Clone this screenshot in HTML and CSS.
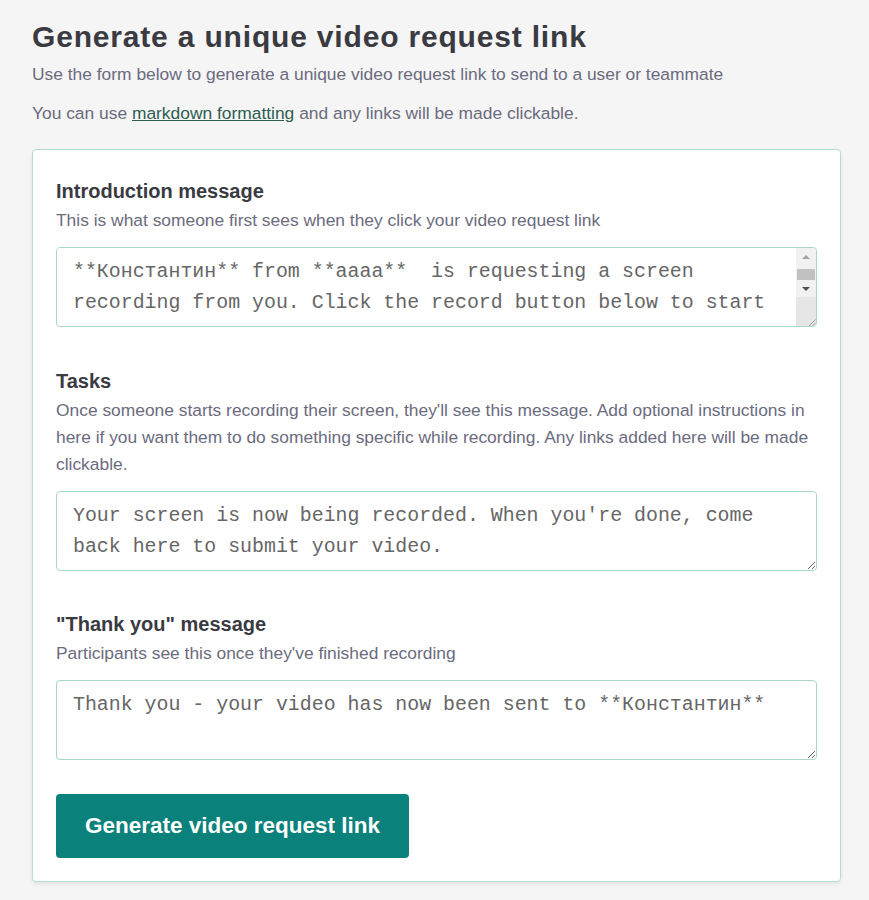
FILE: index.html
```html
<!DOCTYPE html>
<html lang="en">
<head>
<meta charset="utf-8">
<title>Generate a unique video request link</title>
<link rel="stylesheet" href="styles.css">
</head>
<body>
<main class="page">
  <header class="intro">
    <h1 class="title">Generate a unique video request link</h1>
    <p class="lead">Use the form below to generate a unique video request link to send to a user or teammate</p>
    <p class="lead">You can use <a href="#" class="link">markdown formatting</a> and any links will be made clickable.</p>
  </header>
  <form class="card">
    <section class="field">
      <h2 class="field-title">Introduction message</h2>
      <p class="field-desc">This is what someone first sees when they click your video request link</p>
      <div class="box-frame">
        <textarea class="box-input">**Константин** from **aaaa**  is requesting a screen recording from you. Click the record button below to start recording your screen. When you're done, you'll be able to submit your video.</textarea>
        <div class="scrollbar" aria-hidden="true">
          <span class="sb-btn sb-up"></span>
          <span class="sb-track"><span class="sb-thumb"></span></span>
          <span class="sb-btn sb-down"></span>
          <span class="sb-corner">
            <svg width="10" height="10" viewBox="0 0 10 10"><path d="M9.5 2.5 L2.5 9.5 M9.5 6 L6 9.5" stroke="#9a9a9a" stroke-width="1" fill="none"/></svg>
          </span>
        </div>
      </div>
    </section>
    <section class="field">
      <h2 class="field-title">Tasks</h2>
      <p class="field-desc">Once someone starts recording their screen, they'll see this message. Add optional instructions in here if you want them to do something specific while recording. Any links added here will be made clickable.</p>
      <textarea class="box">Your screen is now being recorded. When you're done, come back here to submit your video.</textarea>
    </section>
    <section class="field">
      <h2 class="field-title">"Thank you" message</h2>
      <p class="field-desc">Participants see this once they've finished recording</p>
      <textarea class="box">Thank you - your video has now been sent to **Константин**</textarea>
    </section>
    <button type="button" class="submit">Generate video request link</button>
  </form>
</main>
</body>
</html>
```
FILE: styles.css
```css
html, body {
  margin: 0;
  padding: 0;
  background: #f5f5f5;
}
body {
  font-family: "Liberation Sans", Arial, sans-serif;
  color: #3a3a42;
}
.page {
  padding: 19px 28px 19px 32px;
}
.title {
  margin: 0;
  font-size: 30px;
  line-height: 36px;
  font-weight: 700;
  letter-spacing: 0.82px;
  color: #3a3a42;
}
.lead {
  margin: 0;
  font-size: 17.4px;
  line-height: 22px;
  color: #6b6b7e;
}
.lead + .lead {
  margin-top: 17px;
}
.title + .lead {
  margin-top: 8px;
}
.link {
  color: #2e5e52;
  text-decoration: underline;
}
.intro {
  margin-bottom: 25px;
}
.card {
  background: #fff;
  border: 1px solid #b6dcd3;
  border-radius: 4px;
  box-shadow: 0 2px 4px rgba(0, 0, 0, 0.08);
  padding: 29px 23px 23px;
  display: flex;
  flex-direction: column;
  align-items: flex-start;
}
.field {
  width: 100%;
  margin-bottom: 41.5px;
}
.field:last-of-type {
  margin-bottom: 34px;
}
.field-title {
  margin: 0 0 4px;
  font-size: 20px;
  line-height: 24px;
  font-weight: 700;
  color: #3a3a42;
}
.field-desc {
  margin: 0 0 13px;
  font-size: 17.4px;
  line-height: 27px;
  color: #6b6b7e;
}
.box,
.box-input {
  display: block;
  width: 100%;
  box-sizing: border-box;
  margin: 0;
  font-family: "Liberation Mono", "Courier New", monospace;
  font-size: 19.9px;
  line-height: 31px;
  color: #666;
  background: #fff;
}
.box {
  height: 80px;
  padding: 8px 16px;
  border: 1px solid #a9d6ca;
  border-radius: 4px;
  resize: vertical;
}
.box-frame {
  position: relative;
  height: 80px;
  box-sizing: border-box;
  border: 1px solid #a9d6ca;
  border-radius: 4px;
  background: #fff;
  overflow: hidden;
}
.box-input {
  height: 70px;
  padding: 8px 36px 0 16px;
  border: 0;
  outline: none;
  resize: none;
  overflow: hidden;
}
.scrollbar {
  position: absolute;
  top: 0;
  right: 0;
  bottom: 0;
  width: 20px;
  display: flex;
  flex-direction: column;
  background: #f1f1f1;
}
.sb-btn {
  height: 17px;
  flex: none;
  display: flex;
  align-items: center;
  justify-content: center;
}
.sb-btn::before {
  content: "";
  width: 0;
  height: 0;
  border-left: 4.5px solid transparent;
  border-right: 4.5px solid transparent;
}
.sb-up::before {
  border-bottom: 4.5px solid #a3a3a3;
}
.sb-down::before {
  border-top: 4.5px solid #505050;
}
.sb-track {
  flex: 1;
  display: flex;
  flex-direction: column;
  padding: 4px 1px 0;
}
.sb-thumb {
  height: 11px;
  background: #c1c1c1;
}
.sb-corner {
  height: 30px;
  flex: none;
  background: #e6e6e6;
  display: flex;
  align-items: flex-end;
  justify-content: flex-end;
}
.sb-corner svg {
  display: block;
}
.submit {
  height: 64px;
  padding: 0 29px;
  border: 0;
  border-radius: 4px;
  background: #0a817b;
  color: #fff;
  font-family: "Liberation Sans", Arial, sans-serif;
  font-size: 22.5px;
  font-weight: 700;
}
```
